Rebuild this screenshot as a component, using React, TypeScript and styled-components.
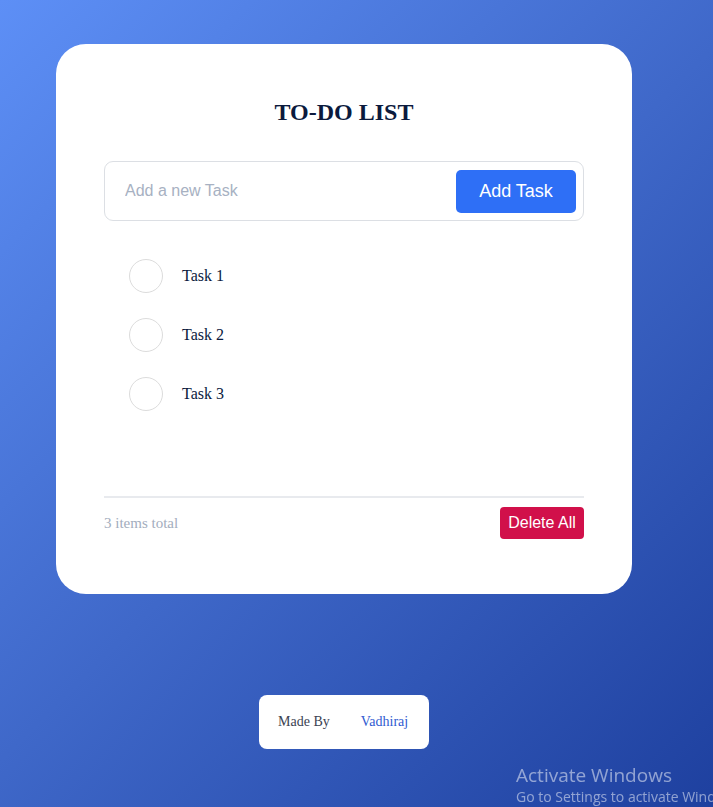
import React, { useState } from "react";
import styled, { createGlobalStyle } from "styled-components";

const Global = createGlobalStyle`
  html, body { margin: 0; padding: 0; }
  body {
    min-height: 807px;
    background: linear-gradient(135deg, #5d8ff6 0%, #3f68c9 50%, #1e409f 100%);
    font-family: "Liberation Serif", "Times New Roman", serif;
    overflow: hidden;
  }
`;

const Page = styled.main`
  min-height: 807px;
  display: flex;
  flex-direction: column;
  align-items: flex-start;
  padding: 44px 0 0 56px;
  box-sizing: border-box;
`;

const Card = styled.section`
  width: 576px;
  height: 550px;
  box-sizing: border-box;
  background: #ffffff;
  border-radius: 30px;
  padding: 54px 48px 0;
  display: flex;
  flex-direction: column;
`;

const Title = styled.h1`
  margin: 0;
  text-align: center;
  font-family: "Liberation Serif", "Times New Roman", serif;
  font-size: 24px;
  font-weight: 700;
  color: #0b1a3d;
  line-height: 28px;
`;

const InputRow = styled.form`
  margin-top: 35px;
  height: 60px;
  box-sizing: border-box;
  border: 1px solid #dcdfe4;
  border-radius: 9px;
  display: flex;
  align-items: center;
  padding: 0 7px 0 18px;
`;

const TaskInput = styled.input`
  flex: 1;
  border: none;
  outline: none;
  font-family: "Liberation Sans", Arial, sans-serif;
  font-size: 16px;
  color: #1f2937;
  background: transparent;
  &::placeholder { color: #a7b1c2; }
`;

const AddButton = styled.button`
  width: 120px;
  height: 43px;
  border: none;
  border-radius: 5px;
  background: #2e6ff6;
  color: #ffffff;
  font-family: "Liberation Sans", Arial, sans-serif;
  font-size: 18px;
  cursor: pointer;
`;

const TaskList = styled.ul`
  list-style: none;
  margin: 38px 0 0;
  padding: 0 0 0 25px;
  display: flex;
  flex-direction: column;
  gap: 25px;
  flex: 1;
`;

const TaskItem = styled.li`
  display: flex;
  align-items: center;
  gap: 19px;
  height: 34px;
`;

const Circle = styled.span<{ $done: boolean }>`
  width: 34px;
  height: 34px;
  box-sizing: border-box;
  border-radius: 50%;
  border: 1px solid #dcdcdc;
  background: ${(p) => (p.$done ? "#2e6ff6" : "transparent")};
  cursor: pointer;
`;

const TaskText = styled.span<{ $done: boolean }>`
  font-family: "Liberation Serif", "Times New Roman", serif;
  font-size: 16px;
  color: #0b1a3d;
  text-decoration: ${(p) => (p.$done ? "line-through" : "none")};
`;

const Footer = styled.div`
  border-top: 2px solid #e8eaee;
  margin-bottom: 55px;
  padding-top: 9px;
  display: flex;
  justify-content: space-between;
  align-items: center;
`;

const Count = styled.span`
  font-family: "Liberation Serif", "Times New Roman", serif;
  font-size: 15px;
  color: #a3adbd;
`;

const DeleteButton = styled.button`
  width: 84px;
  height: 32px;
  border: none;
  border-radius: 4px;
  background: #d1104a;
  color: #ffffff;
  font-family: "Liberation Sans", Arial, sans-serif;
  font-size: 16px;
  padding: 0;
  cursor: pointer;
`;

const Credit = styled.div`
  margin: 101px 0 0 203px;
  width: 170px;
  height: 54px;
  box-sizing: border-box;
  background: #ffffff;
  border-radius: 8px;
  display: flex;
  align-items: center;
  padding-left: 19px;
  gap: 31px;
  font-family: "Liberation Serif", "Times New Roman", serif;
  font-size: 14px;
`;

const CreditLabel = styled.span`
  color: #3b4252;
`;

const CreditName = styled.span`
  color: #2f5bd1;
`;

const Watermark = styled.div`
  position: fixed;
  left: 516px;
  top: 763px;
  right: 0;
  overflow: hidden;
  font-family: "Open Sans", "Noto Sans", sans-serif;
  color: rgba(255, 255, 255, 0.5);
  white-space: nowrap;
  pointer-events: none;
`;

const WatermarkTitle = styled.div`
  font-size: 19px;
  line-height: 24px;
`;

const WatermarkSub = styled.div`
  font-size: 14px;
  line-height: 20px;
`;

export default function App() {
  const [tasks, setTasks] = useState([
    { id: 1, text: "Task 1", done: false },
    { id: 2, text: "Task 2", done: false },
    { id: 3, text: "Task 3", done: false },
  ]);
  const [value, setValue] = useState("");

  const add = (e: React.FormEvent) => {
    e.preventDefault();
    if (!value.trim()) return;
    setTasks((t) => [...t, { id: Date.now(), text: value.trim(), done: false }]);
    setValue("");
  };

  return (
    <>
      <Global />
      <Page>
        <Card>
          <Title>TO-DO LIST</Title>
          <InputRow onSubmit={add}>
            <TaskInput
              placeholder="Add a new Task"
              value={value}
              onChange={(e) => setValue(e.target.value)}
            />
            <AddButton type="submit">Add Task</AddButton>
          </InputRow>
          <TaskList>
            {tasks.map((t) => (
              <TaskItem key={t.id}>
                <Circle
                  $done={t.done}
                  onClick={() =>
                    setTasks((all) =>
                      all.map((x) => (x.id === t.id ? { ...x, done: !x.done } : x))
                    )
                  }
                />
                <TaskText $done={t.done}>{t.text}</TaskText>
              </TaskItem>
            ))}
          </TaskList>
          <Footer>
            <Count>{tasks.length} items total</Count>
            <DeleteButton onClick={() => setTasks([])}>Delete All</DeleteButton>
          </Footer>
        </Card>
        <Credit>
          <CreditLabel>Made By</CreditLabel>
          <CreditName>Vadhiraj</CreditName>
        </Credit>
      </Page>
      <Watermark>
        <WatermarkTitle>Activate Windows</WatermarkTitle>
        <WatermarkSub>Go to Settings to activate Windows.</WatermarkSub>
      </Watermark>
    </>
  );
}
